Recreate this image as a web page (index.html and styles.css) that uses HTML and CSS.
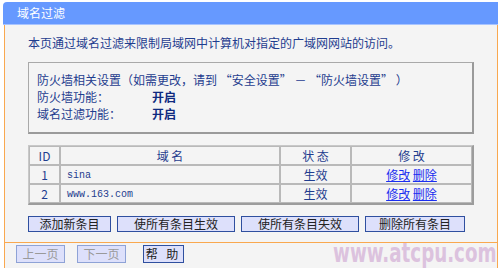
FILE: index.html
```html
<!DOCTYPE html>
<html>
<head>
    <title>域名过滤</title>
    <link rel="stylesheet" href="styles.css">
</head>
<body>
    <div class="panel">
        <div class="panel-title">域名过滤</div>

        <div class="panel-body">
            <p class="intro">本页通过域名过滤来限制局域网中计算机对指定的广域网网站的访问。</p>

            <div class="settings">
                <div class="line">防火墙相关设置（如需更改，请到 “安全设置” － “防火墙设置” ）</div>
                <div class="line"><span class="label">防火墙功能：</span><b>开启</b></div>
                <div class="line"><span class="label">域名过滤功能：</span><b>开启</b></div>
            </div>

            <table class="rules">
                <tr>
                    <th class="col-id">ID</th>
                    <th class="col-name">域 名</th>
                    <th class="col-state">状 态</th>
                    <th class="col-edit">修 改</th>
                </tr>
                <tr>
                    <td class="center">1</td>
                    <td class="domain">sina</td>
                    <td class="center">生效</td>
                    <td class="center"><a href="#">修改</a> <a href="#">删除</a></td>
                </tr>
                <tr>
                    <td class="center">2</td>
                    <td class="domain">www.163.com</td>
                    <td class="center">生效</td>
                    <td class="center"><a href="#">修改</a> <a href="#">删除</a></td>
                </tr>
            </table>

            <div class="actions">
                <button class="btn btn-add">添加新条目</button>
                <button class="btn btn-wide">使所有条目生效</button>
                <button class="btn btn-wide">使所有条目失效</button>
                <button class="btn btn-del">删除所有条目</button>
            </div>
        </div>

        <div class="panel-foot">
            <button class="btn btn-nav" disabled>上一页</button>
            <button class="btn btn-nav" disabled>下一页</button>
            <button class="btn btn-help">帮 助</button>
            <span class="watermark">www.atcpu.com</span>
        </div>
    </div>
</body>
</html>
```

FILE: styles.css
```css
body {
    margin: 0;
    padding: 2px 2px 0 3px;
    background: #ffffff;
    font-family: "Noto Sans CJK SC", "DejaVu Sans", sans-serif;
    font-size: 12px;
    color: #1f3d8f;
}
.panel {
    width: 495px;
}
.panel-title {
    height: 22px;
    line-height: 22px;
    padding-left: 14px;
    background: #6699ff;
    color: #ffffff;
    border-radius: 4px 0 0 0;
    border-bottom: 1px solid #a8c4ff;
}
.panel-body {
    margin-left: 1px;
    padding: 9px 23px 10px 23px;
    background: #f4f4f4;
    border-left: 1px solid #f9a84f;
    border-right: 1px solid #f9a84f;
    border-bottom: 1px solid #f9a84f;
}
.intro {
    margin: 0;
    line-height: 18px;
}
.settings {
    margin-top: 10px;
    padding: 8px 8px 10px 8px;
    border-top: 1px solid #a9a9a9;
    border-left: 1px solid #a9a9a9;
    border-right: 2px solid #9a9a9a;
    border-bottom: 2px solid #9a9a9a;
}
.settings .line {
    line-height: 17px;
}
.settings .label {
    display: inline-block;
    width: 115px;
}
.settings b {
    color: #0f2a80;
}
.rules {
    width: 446px;
    margin-top: 11px;
    border-collapse: separate;
    border-spacing: 0;
    border-top: 1px solid #c8c8c8;
    border-left: 1px solid #c8c8c8;
    border-right: 2px solid #9c9c9c;
    border-bottom: 2px solid #9c9c9c;
    table-layout: fixed;
}
.rules th,
.rules td {
    height: 17px;
    padding: 0;
    border: 1px solid #b9b9b9;
    font-weight: normal;
    line-height: 17px;
    vertical-align: middle;
}
.col-id { width: 29px; }
.col-name { width: 218px; }
.col-state { width: 69px; }
.center {
    text-align: center;
}
.rules .domain {
    height: 14px;
    padding: 3px 0 0 6px;
    font-family: "Liberation Mono", monospace;
    font-size: 10px;
    line-height: 14px;
}
.rules a {
    color: #1a2ef0;
    text-decoration: underline;
}
.actions {
    display: flex;
    gap: 6px;
    margin-top: 11px;
}
.btn {
    height: 16px;
    padding: 0;
    background: #dde0fb;
    border: 1px solid #2f4f9f;
    color: #222222;
    font-family: "Noto Sans CJK SC", sans-serif;
    font-size: 12px;
    line-height: 14px;
}
.btn-add { width: 83px; }
.btn-wide { width: 118px; }
.btn-del { width: 100px; }
.panel-foot {
    display: flex;
    align-items: flex-start;
    height: 23px;
    margin-left: 1px;
    padding: 2px 0 0 11px;
    background: #f4f4f4;
    border-left: 1px solid #f9a84f;
    border-right: 1px solid #f9a84f;
    border-bottom: 1px solid #f9a84f;
}
.btn-nav {
    width: 49px;
    height: 18px;
    margin-right: 12px;
    border-color: #8ea2d6;
    color: #9a9a9a;
}
.btn-help {
    width: 41px;
    height: 18px;
    margin-left: 5px;
    letter-spacing: 3px;
}
.watermark {
    display: inline-block;
    margin-left: auto;
    margin-right: 1px;
    font-family: "DejaVu Sans Condensed", "DejaVu Sans", sans-serif;
    font-stretch: condensed;
    font-weight: bold;
    font-size: 26px;
    line-height: 16px;
    color: #dcc2de;
    transform: scaleX(0.78);
    transform-origin: right center;
}
```
